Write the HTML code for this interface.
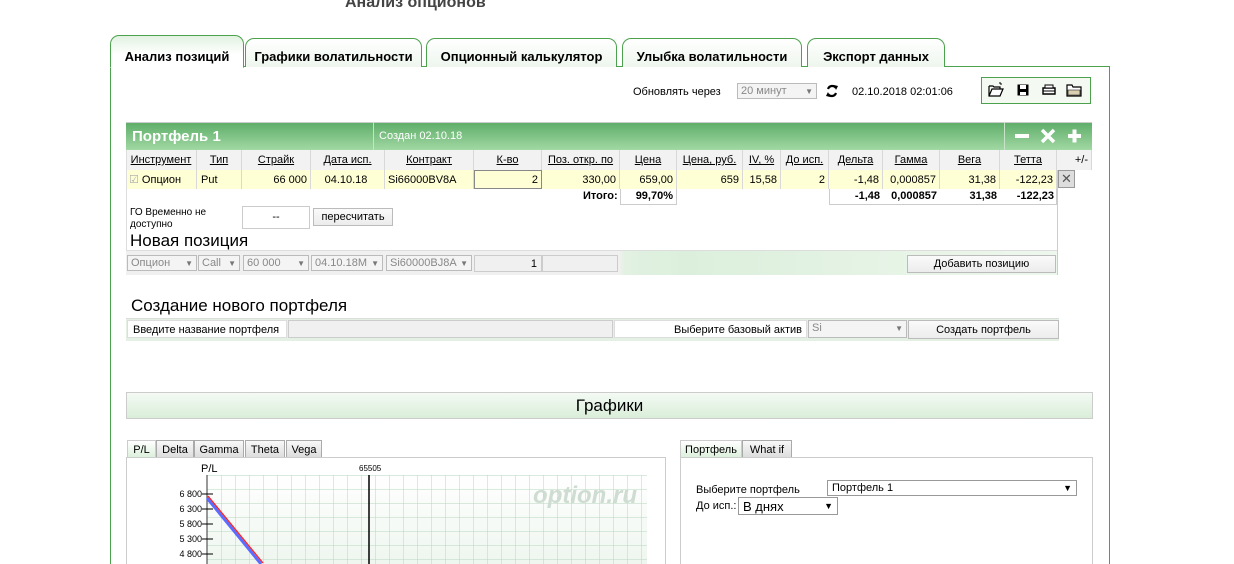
<!DOCTYPE html>
<html><head><meta charset="utf-8"><style>
*{box-sizing:border-box;margin:0;padding:0}
html,body{width:1234px;height:564px;overflow:hidden}
body{background:#fff;font-family:"Liberation Sans",Arial,sans-serif;font-size:11px;color:#000;position:relative}
.a{position:absolute}
.tab{position:absolute;top:38px;height:29px;border:1px solid #4ca24c;border-bottom:none;border-radius:9px 9px 0 0;background:linear-gradient(#fff,#eef6ee);font-weight:bold;font-size:13px;text-align:center;line-height:36px}
.th{position:absolute;top:150px;height:20px;line-height:21px;text-align:center;text-decoration:underline;background:#f2f2f2;border-right:1px solid #d8d8d8;font-size:11px}
.td{position:absolute;top:170px;height:19px;line-height:20px;text-align:right;padding-right:3px;background:#ffffd6;border-right:1px solid #d8d8d8;font-size:11px}
.sel{position:absolute;height:16px;border:1px solid #bbb;background:#f4f4f4;color:#888;line-height:15px;padding-left:3px;font-size:11px}
.sel:after{content:"▼";position:absolute;right:3px;font-size:8px;color:#777}
.btn{position:absolute;border:1px solid #bbb;background:linear-gradient(#fafafa,#ececec);text-align:center;font-size:11px}
.ct{position:absolute;top:440px;height:18px;border:1px solid #aaa;background:linear-gradient(#f8f8f8,#ddd);font-size:11px;line-height:19px;text-align:center}
</style></head><body>
<div class="a" style="left:345px;top:-6px;font-size:16px;font-weight:bold;color:#444">Анализ опционов</div>

<div class="a" style="left:110px;top:66px;width:1000px;height:520px;border:1px solid #4ca24c;border-bottom:none"></div>
<div class="tab" style="left:110px;width:134px;top:35px;height:33px;background:linear-gradient(#e2f2e2,#fff 60%);border-bottom:1px solid #fff;line-height:42px">Анализ позиций</div>
<div class="tab" style="left:245px;width:177px">Графики волатильности</div>
<div class="tab" style="left:426px;width:191px">Опционный калькулятор</div>
<div class="tab" style="left:622px;width:180px">Улыбка волатильности</div>
<div class="tab" style="left:807px;width:138px">Экспорт данных</div>

<div class="a" style="left:633px;top:86px">Обновлять через</div>
<div class="sel" style="left:737px;top:83px;width:80px;height:16px">20 минут</div>
<svg class="a" style="left:825px;top:84px" width="14" height="14" viewBox="0 0 14 14"><path d="M3 5A4.5 4.5 0 0 1 11 4M11 9A4.5 4.5 0 0 1 3 10" stroke="#000" stroke-width="2.2" fill="none"/><path d="M9 1L13 2L11 6Z M5 13L1 12L3 8Z" fill="#000"/></svg>
<div class="a" style="left:852px;top:86px">02.10.2018 02:01:06</div>
<div class="a" style="left:981px;top:77px;width:110px;height:27px;border:1px solid #4ca24c;background:#f4faf2"></div>
<svg class="a" style="left:988px;top:82px" width="100" height="16" viewBox="0 0 100 16">
<path d="M1 4H5L6 5H12V7M1 4V14H12L15 7H4L1 14" stroke="#000" stroke-width="1.2" fill="#fff"/>
<path d="M13 3L13 1M13 1L11 1" stroke="#000"/>
<rect x="29.5" y="2.5" width="11" height="11" fill="#000"/><rect x="32" y="3" width="6" height="4" fill="#fff"/><rect x="32" y="10" width="6" height="3" fill="#fff"/>
<path d="M55 6H67V12H55Z" fill="#fff" stroke="#000" stroke-width="1.4"/><path d="M57 3H65V6H57Z" fill="#fff" stroke="#000"/><path d="M55 9H67" stroke="#000"/>
<path d="M79 3H84L85 5H93V14H79Z" fill="#fff" stroke="#000" stroke-width="1.2"/><path d="M80 8H92V13H80Z" fill="#d8d0b0" stroke="#000" stroke-width=".6"/>
</svg>

<div class="a" style="left:126px;top:122px;width:966px;height:28px;background:linear-gradient(#5fae6a,#a2d8a4);border-top:1px solid #ccc"></div>
<div class="a" style="left:132px;top:128px;color:#fff;font-weight:bold;font-size:15px">Портфель 1</div>
<div class="a" style="left:373px;top:122px;width:1px;height:28px;background:#c8e4c8"></div>
<div class="a" style="left:379px;top:130px;color:#fff;font-size:11px">Создан 02.10.18</div>
<div class="a" style="left:1004px;top:122px;width:1px;height:28px;background:#c8e4c8"></div>
<svg class="a" style="left:1014px;top:128px" width="70" height="16" viewBox="0 0 70 16"><rect x="1" y="6" width="14" height="4" fill="#fff"/><path d="M28 2L40 14M40 2L28 14" stroke="#fff" stroke-width="3.5"/><rect x="54" y="6" width="13" height="4" fill="#fff"/><rect x="58.5" y="1.5" width="4" height="13" fill="#fff"/></svg>

<div class="th" style="left:126px;width:71px">Инструмент</div>
<div class="th" style="left:197px;width:45px">Тип</div>
<div class="th" style="left:242px;width:69px">Страйк</div>
<div class="th" style="left:311px;width:74px">Дата исп.</div>
<div class="th" style="left:385px;width:89px">Контракт</div>
<div class="th" style="left:474px;width:68px">К-во</div>
<div class="th" style="left:542px;width:78px">Поз. откр. по</div>
<div class="th" style="left:620px;width:57px">Цена</div>
<div class="th" style="left:677px;width:66px">Цена, руб.</div>
<div class="th" style="left:743px;width:38px">IV, %</div>
<div class="th" style="left:781px;width:48px">До исп.</div>
<div class="th" style="left:829px;width:54px">Дельта</div>
<div class="th" style="left:883px;width:57px">Гамма</div>
<div class="th" style="left:940px;width:60px">Вега</div>
<div class="th" style="left:1000px;width:57px">Тетта</div>
<div class="th" style="left:1057px;width:35px;text-decoration:none;text-align:right;padding-right:3px">+/-</div>

<div class="td" style="left:126px;width:71px;text-align:left;padding-left:3px;color:#000"><span style="color:#aaa">☑</span> Опцион</div>
<div class="td" style="left:197px;width:45px;text-align:left;padding-left:4px">Put</div>
<div class="td" style="left:242px;width:69px">66 000</div>
<div class="td" style="left:311px;width:74px;text-align:center">04.10.18</div>
<div class="td" style="left:385px;width:89px;text-align:left;padding-left:3px">Si66000BV8A</div>
<div class="td" style="left:474px;width:68px;border:1px solid #888;line-height:18px">2</div>
<div class="td" style="left:542px;width:78px">330,00</div>
<div class="td" style="left:620px;width:57px">659,00</div>
<div class="td" style="left:677px;width:66px">659</div>
<div class="td" style="left:743px;width:38px">15,58</div>
<div class="td" style="left:781px;width:48px">2</div>
<div class="td" style="left:829px;width:54px">-1,48</div>
<div class="td" style="left:883px;width:57px">0,000857</div>
<div class="td" style="left:940px;width:60px">31,38</div>
<div class="td" style="left:1000px;width:57px">-122,23</div>
<div class="a" style="left:1058px;top:170px;width:17px;height:18px;background:#ddd;border:1px solid #999;text-align:center;line-height:16px;font-size:13px;color:#555">✕</div>

<div class="a" style="left:583px;top:190px;font-weight:bold">Итого:</div>
<div class="a" style="left:620px;top:189px;width:57px;height:16px;border:1px solid #ccc;border-top:none;text-align:right;padding-right:3px;font-weight:bold;line-height:14px">99,70%</div>
<div class="a" style="left:829px;top:189px;width:228px;height:16px;border:1px solid #ccc;border-top:none"></div>
<div class="a" style="left:829px;top:190px;width:54px;text-align:right;padding-right:3px;font-weight:bold">-1,48</div>
<div class="a" style="left:883px;top:190px;width:57px;text-align:right;padding-right:3px;font-weight:bold">0,000857</div>
<div class="a" style="left:940px;top:190px;width:60px;text-align:right;padding-right:3px;font-weight:bold">31,38</div>
<div class="a" style="left:1000px;top:190px;width:57px;text-align:right;padding-right:3px;font-weight:bold">-122,23</div>

<div class="a" style="left:1057px;top:170px;width:1px;height:105px;background:#ccc"></div>
<div class="a" style="left:126px;top:150px;width:1px;height:125px;background:#ddd"></div>

<div class="a" style="left:130px;top:207px;font-size:10px;line-height:12px;width:100px">ГО Временно не доступно</div>
<div class="a" style="left:242px;top:206px;width:68px;height:23px;border:1px solid #ccc;text-align:center;line-height:21px">--</div>
<div class="btn" style="left:313px;top:208px;width:80px;height:18px;line-height:17px">пересчитать</div>
<div class="a" style="left:130px;top:231px;font-size:17px">Новая позиция</div>

<div class="a" style="left:126px;top:250px;width:931px;height:25px;background:linear-gradient(90deg,#f0f0f0 0,#f0f0f0 53%,#e2f1e2 53.5%,#dcefdc 60%,#eef7ee);border-top:1px solid #ddd"></div>
<div class="sel" style="left:127px;top:255px;width:70px">Опцион</div>
<div class="sel" style="left:198px;top:255px;width:42px">Call</div>
<div class="sel" style="left:243px;top:255px;width:66px">60 000</div>
<div class="sel" style="left:311px;top:255px;width:72px">04.10.18M</div>
<div class="sel" style="left:386px;top:255px;width:86px">Si60000BJ8A</div>
<div class="a" style="left:474px;top:255px;width:68px;height:17px;border:1px solid #ccc;background:#f0f0f0;text-align:right;padding-right:4px;line-height:16px">1</div>
<div class="a" style="left:542px;top:255px;width:76px;height:17px;border:1px solid #ccc;background:#f0f0f0"></div>
<div class="btn" style="left:907px;top:255px;width:149px;height:18px;line-height:17px">Добавить позицию</div>

<div class="a" style="left:131px;top:296px;font-size:17px">Создание нового портфеля</div>
<div class="a" style="left:126px;top:318px;width:933px;height:23px;background:#e4f0e4;border-top:1px solid #ddd"></div>
<div class="a" style="left:127px;top:320px;width:160px;height:18px;background:#fff;border:1px solid #ddd;padding-left:5px;line-height:18px">Введите название портфеля</div>
<div class="a" style="left:288px;top:320px;width:325px;height:18px;background:#f0f0f0;border:1px solid #ccc"></div>
<div class="a" style="left:614px;top:320px;width:193px;height:18px;background:#fff;border:1px solid #ddd;text-align:right;padding-right:4px;line-height:18px">Выберите базовый актив</div>
<div class="sel" style="left:808px;top:320px;width:99px;height:18px">Si</div>
<div class="btn" style="left:908px;top:320px;width:151px;height:19px;line-height:18px">Создать портфель</div>

<div class="a" style="left:126px;top:392px;width:967px;height:27px;border:1px solid #ccc;background:linear-gradient(#f4faf4,#d9eed9);text-align:center;font-size:17px;line-height:26px">Графики</div>

<div class="ct" style="left:127px;width:29px;background:linear-gradient(#fff,#ddf0dd);border-color:#ccc">P/L</div>
<div class="ct" style="left:156px;width:38px">Delta</div>
<div class="ct" style="left:194px;width:50px">Gamma</div>
<div class="ct" style="left:245px;width:40px">Theta</div>
<div class="ct" style="left:286px;width:36px">Vega</div>
<div class="a" style="left:126px;top:457px;width:540px;height:120px;border:1px solid #ccc"></div>
<svg class="a" style="left:126px;top:458px" width="540" height="106">
<defs><pattern id="g" width="14" height="14" patternUnits="userSpaceOnUse" x="81" y="17"><path d="M0 0H14M0 0V14" stroke="#b7d6bf" fill="none"/></pattern>
<linearGradient id="bg" x1="0" y1="0" x2="0" y2="1"><stop offset="0" stop-color="#fff"/><stop offset="1" stop-color="#eef6ef"/></linearGradient></defs>
<rect x="81" y="17" width="440" height="90" fill="url(#bg)"/>
<rect x="81" y="17" width="440" height="90" fill="url(#g)"/>
<text x="75" y="14" font-size="11" font-family="Liberation Sans">P/L</text>
<text x="233" y="13" font-size="8" font-family="Liberation Sans">65505</text>
<line x1="243" y1="17" x2="243" y2="106" stroke="#000" stroke-width="1.5"/>
<line x1="81" y1="17" x2="81" y2="106" stroke="#333"/>
<text x="511" y="45" font-size="24" font-weight="bold" font-style="italic" fill="#cfdcd2" text-anchor="end" font-family="Liberation Sans">option.ru</text>
<g font-size="9" font-family="Liberation Sans" text-anchor="end">
<text x="76" y="39">6 800</text><line x1="76" y1="36" x2="87" y2="36" stroke="#000"/>
<text x="76" y="54">6 300</text><line x1="76" y1="51" x2="87" y2="51" stroke="#000"/>
<text x="76" y="69">5 800</text><line x1="76" y1="66" x2="87" y2="66" stroke="#000"/>
<text x="76" y="84">5 300</text><line x1="76" y1="81" x2="87" y2="81" stroke="#000"/>
<text x="76" y="99">4 800</text><line x1="76" y1="96" x2="87" y2="96" stroke="#000"/>
</g>
<line x1="81" y1="40" x2="135" y2="106" stroke="#5b6cff" stroke-width="3"/>
<line x1="82" y1="38" x2="137" y2="105" stroke="#f22" stroke-width="1.3"/>
</svg>

<div class="ct" style="left:680px;width:62px;background:linear-gradient(#fff,#ddf0dd);border-color:#ccc">Портфель</div>
<div class="ct" style="left:742px;width:50px">What if</div>
<div class="a" style="left:680px;top:457px;width:413px;height:120px;border:1px solid #ccc"></div>
<div class="a" style="left:696px;top:484px">Выберите портфель</div>
<div class="a" style="left:827px;top:480px;width:250px;height:16px;border:1px solid #999;padding-left:4px;line-height:15px">Портфель 1<span style="position:absolute;right:4px;font-size:9px">▼</span></div>
<div class="a" style="left:696px;top:500px">До исп.:</div>
<div class="a" style="left:738px;top:497px;width:100px;height:18px;border:1px solid #999;padding-left:4px;font-size:13px;line-height:17px">В днях<span style="position:absolute;right:4px;font-size:9px">▼</span></div>
</body></html>
